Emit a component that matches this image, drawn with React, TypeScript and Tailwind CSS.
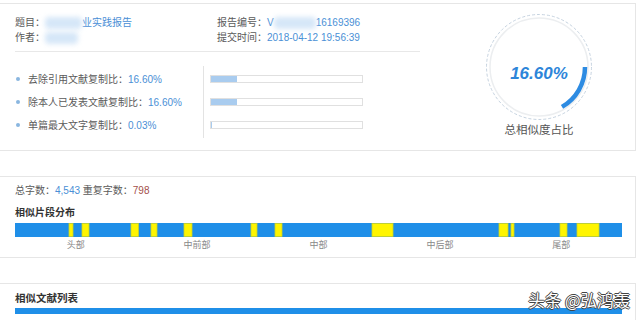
const font = "font-['Liberation_Sans','Noto_Sans_CJK_SC',sans-serif]";

const segments = [
  [54, 4], [67, 7], [116, 7.5], [136, 6], [169, 8], [236, 6], [260, 7],
  [357, 21], [484, 9], [496, 3], [545, 7], [562, 22],
];

const rows = [
  { label: "去除引用文献复制比：", value: "16.60%", fill: 26 },
  { label: "除本人已发表文献复制比：", value: "16.60%", fill: 26 },
  { label: "单篇最大文字复制比：", value: "0.03%", fill: 1 },
];

const Blur = ({ w }: { w: number }) => (
  <span
    className="inline-block h-[12px] align-middle bg-[#d6e7f8] blur-[2.5px] rounded-sm"
    style={{ width: w }}
  />
);

const App = () => {
  return (
    <div className={`relative h-[320px] w-[640px] overflow-hidden bg-white text-[#5a5a5a] ${font}`}>
      {/* summary card */}
      <div className="mt-[3px] mr-[4px] h-[148px] border border-l-0 border-[#e6e6e6] flex">
        <div className="w-[484px] pl-[15px] pt-[11px]">
          <div className="w-[405px] flex border-b border-[#e8e8e8] pb-[6px] text-[10px] leading-[15px]">
            <div className="w-[202px]">
              <div className="flex items-center">
                题目：<Blur w={37} />
                <span className="text-[#4a8fd6]">业实践报告</span>
              </div>
              <div className="flex items-center">
                作者：<Blur w={33} />
              </div>
            </div>
            <div>
              <div className="flex items-center">
                报告编号：<span className="text-[#4a8fd6]">V</span>
                <Blur w={42} />
                <span className="text-[#4a8fd6]">16169396</span>
              </div>
              <div>
                提交时间：<span className="text-[#4a8fd6]">2018-04-12 19:56:39</span>
              </div>
            </div>
          </div>
          <div className="mt-[14px] flex h-[72px]">
            <div className="w-[188px] flex flex-col justify-center text-[10px]">
              {rows.map((r) => (
                <div key={r.label} className="h-[23px] flex items-center">
                  <span className="w-[4px] h-[4px] rounded-full bg-[#8ab6e0] ml-[1px] mr-[8px]" />
                  <span>{r.label}</span>
                  <span className="text-[#4a8fd6]">{r.value}</span>
                </div>
              ))}
            </div>
            <div className="border-l border-[#e3e3e3] pl-[6px] flex flex-col justify-center">
              {rows.map((r) => (
                <div key={r.label} className="h-[23px] flex items-center">
                  <div className="w-[153px] h-[8px] border border-[#e0e0e0] bg-white">
                    <div className="h-full bg-[#a9ccef]" style={{ width: r.fill }} />
                  </div>
                </div>
              ))}
            </div>
          </div>
        </div>
        <div className="w-[110px] pt-[8px] flex flex-col items-center">
          <div className="relative w-[110px] h-[110px]">
            <svg width="110" height="110" viewBox="0 0 110 110">
              <circle cx="55" cy="55" r="52.5" fill="none" stroke="#c6d3e0" strokeWidth="1" strokeDasharray="3 2" />
              <circle cx="55" cy="55" r="49" fill="none" stroke="#eceef0" strokeWidth="1.5" />
              <path d="M101 55 A46 46 0 0 1 78 94.84" fill="none" stroke="#2d8be2" strokeWidth="4.5" />
            </svg>
            <div className="absolute inset-x-0 top-[52px] text-center text-[17px] leading-[20px] font-bold italic text-[#2d85d9]">
              16.60%
            </div>
          </div>
          <div className="text-[11.5px] leading-[16px] text-[#555] whitespace-nowrap">总相似度占比</div>
        </div>
      </div>

      {/* distribution card */}
      <div className="mt-[25px] mr-[4px] h-[82px] border border-l-0 border-[#e6e6e6] pl-[15px] pr-[13px] pt-[7px]">
        <div className="text-[10px] leading-[14px]">
          总字数：<span className="text-[#4a8fd6]">4,543</span> 重复字数：
          <span className="text-[#a4504b]">798</span>
        </div>
        <div className="mt-[8px] text-[10px] leading-[14px] font-bold text-[#333]">相似片段分布</div>
        <svg className="mt-[3px] block" width="607" height="14" viewBox="0 0 607 14">
          <rect x="0" y="0" width="607" height="14" fill="#1f8fe8" />
          {segments.map(([x, w]) => (
            <rect key={x} x={x} y="0.5" width={w} height="13" fill="#fff500" stroke="#c9d12a" strokeWidth="0.8" />
          ))}
        </svg>
        <div className="mt-[2px] grid grid-cols-5 text-center text-[9px] leading-[12px] text-[#888]">
          <span>头部</span>
          <span>中前部</span>
          <span>中部</span>
          <span>中后部</span>
          <span>尾部</span>
        </div>
      </div>

      {/* list card */}
      <div className="mt-[25px] mr-[4px] h-[60px] border-t border-r border-[#e6e6e6] pl-[15px] pr-[13px] pt-[7px]">
        <div className="text-[10.5px] leading-[14px] font-bold text-[#333]">相似文献列表</div>
        <div className="mt-[3px] h-[6px] bg-[#1f8fe8]" />
      </div>

      <div className="absolute right-[10px] top-[290px] text-[16.5px] leading-[20px] text-white font-['Noto_Sans_CJK_SC',sans-serif] [text-shadow:1px_0_0_#444,-1px_0_0_#444,0_1px_0_#444,0_-1px_0_#444]">
        头条 @弘鸿轰
      </div>
    </div>
  );
};

export default App;
